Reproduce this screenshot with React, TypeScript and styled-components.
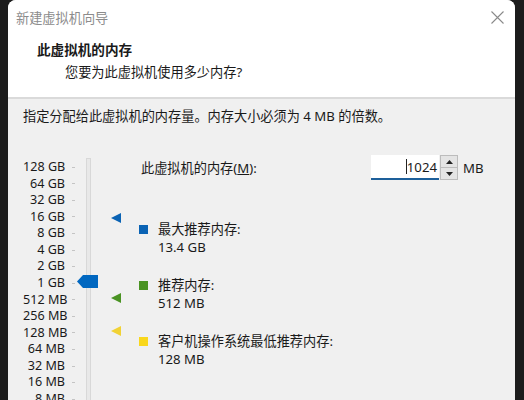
import { FC } from 'react'
import styled, { createGlobalStyle } from 'styled-components'

const GlobalStyle = createGlobalStyle`
  html, body {
    margin: 0;
    padding: 0;
    background: #1c1c1c;
  }
  body {
    font-family: 'Noto Sans', 'Noto Sans CJK SC', sans-serif;
    color: #1a1a1a;
  }
`

const scaleLabels = [
  '128 GB', '64 GB', '32 GB', '16 GB', '8 GB', '4 GB', '2 GB', '1 GB',
  '512 MB', '256 MB', '128 MB', '64 MB', '32 MB', '16 MB', '8 MB'
]

const markers = [
  { color: '#0a63b4', top: 58 },
  { color: '#4a9323', top: 138 },
  { color: '#f1d234', top: 171 }
]

const legend = [
  { color: '#0a63b4', title: '最大推荐内存:', value: '13.4 GB' },
  { color: '#4a9323', title: '推荐内存:', value: '512 MB' },
  { color: '#f9d71c', title: '客户机操作系统最低推荐内存:', value: '128 MB' }
]

const App: FC = () => (
  <Screen>
    <GlobalStyle />
    <Dialog>
      <Header>
        <TitleBar>
          <WindowTitle>新建虚拟机向导</WindowTitle>
          <CloseIcon width="13" height="13" viewBox="0 0 13 13">
            <path d="M0.5 0.5 L12.5 12.5 M12.5 0.5 L0.5 12.5" stroke="#8a8a8a" strokeWidth="1.1" />
          </CloseIcon>
        </TitleBar>
        <Heading>此虚拟机的内存</Heading>
        <SubHeading>您要为此虚拟机使用多少内存?</SubHeading>
      </Header>
      <Body>
        <Instruction>指定分配给此虚拟机的内存量。内存大小必须为 4 MB 的倍数。</Instruction>
        <Main>
          <Slider>
            <ScaleList>
              {scaleLabels.map((label) => (
                <ScaleRow key={label}>
                  <ScaleLabel>{label}</ScaleLabel>
                  <Tick />
                </ScaleRow>
              ))}
            </ScaleList>
            <TrackColumn>
              <Track />
              <Thumb width="21" height="13" viewBox="0 0 21 13">
                <path d="M0 6.5 L6 0 L21 0 L21 13 L6 13 Z" fill="#0067c0" />
              </Thumb>
            </TrackColumn>
            <MarkerColumn>
              {markers.map((m) => (
                <Marker key={m.top} width="10" height="10" viewBox="0 0 10 10" style={{ top: m.top }}>
                  <path d="M0 5 L10 0 L10 10 Z" fill={m.color} />
                </Marker>
              ))}
            </MarkerColumn>
          </Slider>
          <Details>
            <MemoryRow>
              <MemoryLabel>
                此虚拟机的内存(<u>M</u>):
              </MemoryLabel>
              <InputBox>
                <Caret />
                1024
              </InputBox>
              <Spinner>
                <SpinButton>
                  <svg width="7" height="4" viewBox="0 0 7 4">
                    <path d="M0 4 L3.5 0 L7 4 Z" fill="#222" />
                  </svg>
                </SpinButton>
                <SpinButton>
                  <svg width="7" height="4" viewBox="0 0 7 4">
                    <path d="M0 0 L7 0 L3.5 4 Z" fill="#222" />
                  </svg>
                </SpinButton>
              </Spinner>
              <Unit>MB</Unit>
            </MemoryRow>
            <LegendList>
              {legend.map((item) => (
                <LegendItem key={item.title}>
                  <Swatch $color={item.color} />
                  <LegendText>
                    <div>{item.title}</div>
                    <div>{item.value}</div>
                  </LegendText>
                </LegendItem>
              ))}
            </LegendList>
          </Details>
        </Main>
      </Body>
    </Dialog>
  </Screen>
)

const Screen = styled.div`
  height: 400px;
  width: 524px;
  padding-left: 8px;
  box-sizing: border-box;
  overflow: hidden;
  background: #1c1c1c;
`

const Dialog = styled.div`
  width: 507px;
  height: 420px;
  background: #f0f0f0;
  border-radius: 8px 8px 0 0;
  overflow: hidden;
`

const Header = styled.div`
  height: 97px;
  background: #ffffff;
  border-bottom: 2px solid #dadada;
  padding-left: 8px;
`

const TitleBar = styled.div`
  display: flex;
  align-items: center;
  justify-content: space-between;
  height: 34px;
  padding-right: 11px;
`

const WindowTitle = styled.span`
  font-size: 13.2px;
  color: #8c8c8c;
`

const CloseIcon = styled.svg`
  display: block;
`

const Heading = styled.div`
  margin-top: 7px;
  padding-left: 21px;
  font-size: 13.6px;
  font-weight: 700;
  line-height: 18px;
`

const SubHeading = styled.div`
  margin-top: 4px;
  padding-left: 49px;
  font-size: 13.2px;
  line-height: 18px;
`

const Body = styled.div`
  padding: 8px 0 0 15px;
`

const Instruction = styled.div`
  font-size: 13.2px;
  line-height: 18px;
`

const Main = styled.div`
  display: flex;
  margin-top: 30px;
`

const Slider = styled.div`
  display: flex;
  width: 116px;
  flex-shrink: 0;
`

const ScaleList = styled.div`
  display: flex;
  flex-direction: column;
  padding-top: 4px;
`

const ScaleRow = styled.div`
  display: flex;
  align-items: center;
  height: 16.57px;
`

const ScaleLabel = styled.span`
  width: 42px;
  text-align: right;
  font-size: 12.6px;
  line-height: 16.57px;
  white-space: nowrap;
`

const Tick = styled.span`
  width: 3px;
  height: 1px;
  margin-left: 7px;
  background: #c4c4c4;
`

const TrackColumn = styled.div`
  position: relative;
  margin-left: 11px;
  width: 5px;
`

const Track = styled.div`
  margin-top: 3px;
  width: 5px;
  height: 270px;
  box-sizing: border-box;
  background: #e8e8e8;
  border: 1px solid #d8d8d8;
`

const Thumb = styled.svg`
  position: absolute;
  top: 120px;
  left: -9px;
`

const MarkerColumn = styled.div`
  position: relative;
  margin-left: 20px;
  width: 10px;
`

const Marker = styled.svg`
  position: absolute;
  left: 0;
`

const Details = styled.div`
  display: flex;
  flex-direction: column;
`

const MemoryRow = styled.div`
  display: flex;
  align-items: center;
  height: 25px;
`

const MemoryLabel = styled.span`
  width: 232px;
  padding-left: 2px;
  box-sizing: border-box;
  font-size: 13.2px;
`

const InputBox = styled.div`
  display: flex;
  align-items: center;
  justify-content: flex-end;
  width: 68px;
  height: 25px;
  box-sizing: border-box;
  padding-right: 2px;
  background: #ffffff;
  border-bottom: 2px solid #1d5f9a;
  font-size: 13.2px;
`

const Caret = styled.span`
  width: 1px;
  height: 15px;
  background: #222;
`

const Spinner = styled.div`
  display: flex;
  flex-direction: column;
  width: 18px;
  height: 25px;
  margin-left: 1px;
`

const SpinButton = styled.div`
  flex: 1;
  display: flex;
  align-items: center;
  justify-content: center;
  background: #e4e4e4;
  border: 1px solid #bcbcbc;
  &:first-child {
    border-bottom: none;
  }
`

const Unit = styled.span`
  margin-left: 5px;
  font-size: 13.2px;
`

const LegendList = styled.div`
  display: flex;
  flex-direction: column;
  gap: 20px;
  margin-top: 40px;
`

const LegendItem = styled.div`
  display: flex;
  align-items: flex-start;
`

const Swatch = styled.span<{ $color: string }>`
  width: 9px;
  height: 9px;
  margin-top: 5px;
  margin-right: 10px;
  background: ${({ $color }) => $color};
`

const LegendText = styled.div`
  font-size: 13.2px;
  line-height: 18px;
`

export default App
